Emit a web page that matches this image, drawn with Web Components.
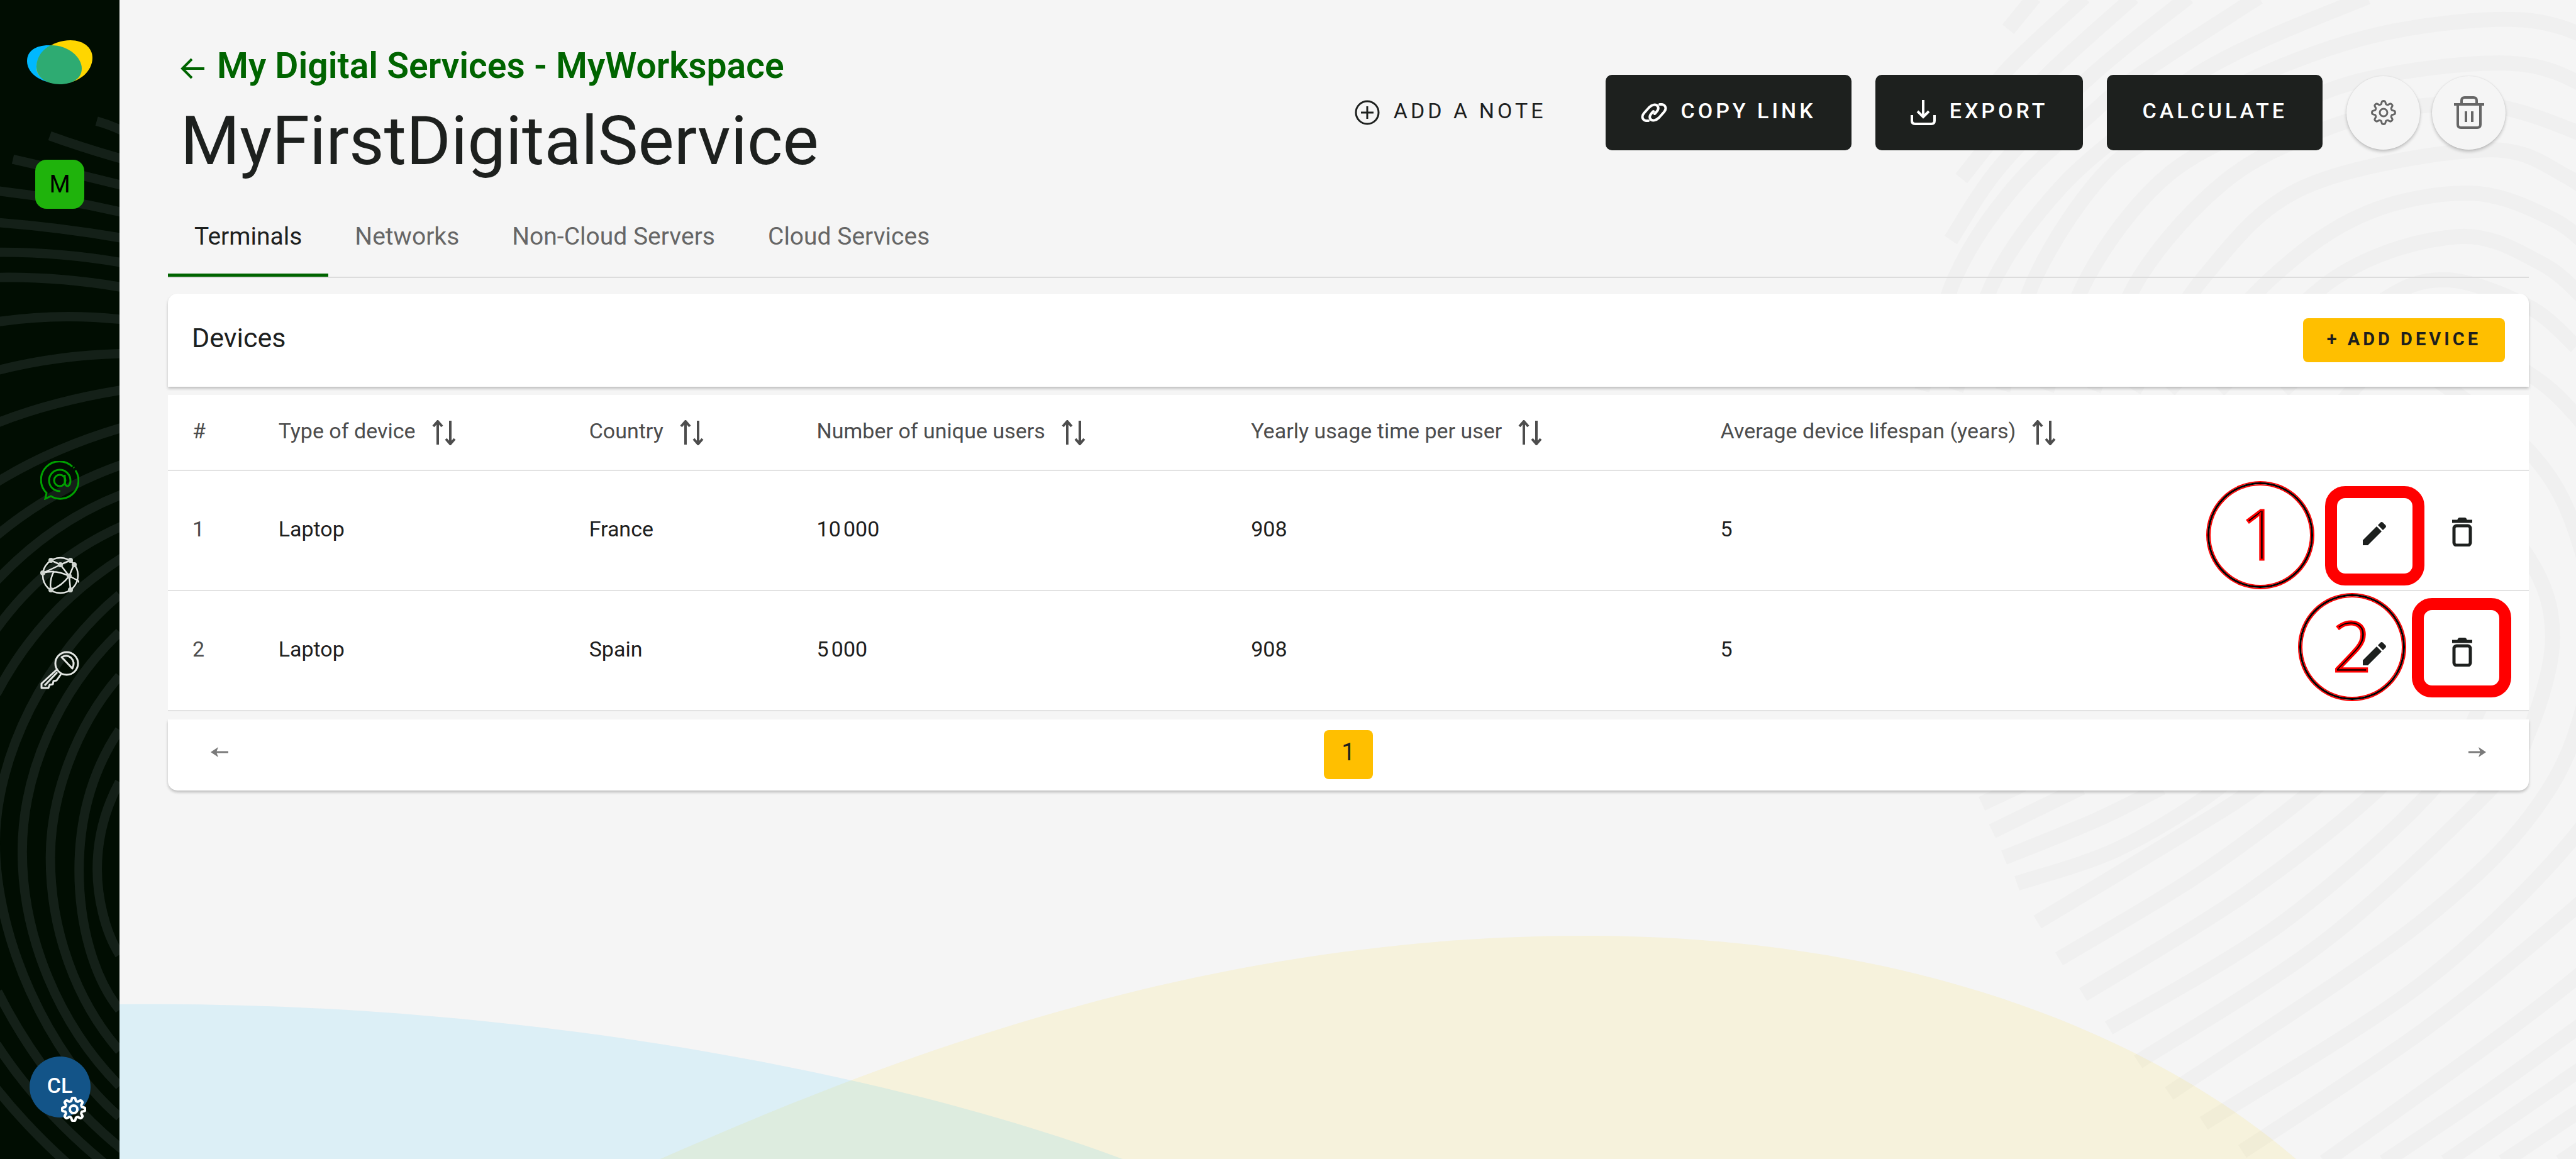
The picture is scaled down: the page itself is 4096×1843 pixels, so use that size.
<!DOCTYPE html>
<html lang="en">
<head>
<meta charset="utf-8">
<title>MyFirstDigitalService</title>
<style>
  html, body { margin: 0; height: 100%; }
  body { font-family: Roboto, "Liberation Sans", sans-serif; color: #1d201e; background: #f5f5f5; overflow: hidden; }
</style>
</head>
<body>
<app-shell>
  <side-nav slot="nav"></side-nav>
  <page-header>
    <a slot="back" href="#services">My Digital Services - MyWorkspace</a>
    <span slot="title">MyFirstDigitalService</span>
    <action-button slot="actions" variant="text" icon="plus">ADD A NOTE</action-button>
    <action-button slot="actions" icon="link">COPY LINK</action-button>
    <action-button slot="actions" icon="export">EXPORT</action-button>
    <action-button slot="actions">CALCULATE</action-button>
    <round-button slot="actions" icon="gear" label="Settings"></round-button>
    <round-button slot="actions" icon="bin" label="Delete service"></round-button>
  </page-header>
  <tab-bar items="Terminals,Networks,Non-Cloud Servers,Cloud Services"></tab-bar>
  <device-panel></device-panel>
  <note-frame slot="notes" style="top:773px;right:241px"></note-frame>
  <note-frame slot="notes" style="top:951px;right:103px"></note-frame>
  <note-ring slot="notes" style="top:765px;right:416px">1</note-ring>
  <note-ring slot="notes" style="top:943px;right:270px">2</note-ring>
</app-shell>

<script>
const define = (name, html, setup) => {
  const tpl = document.createElement('template');
  customElements.define(name, class extends HTMLElement {
    constructor() {
      super();
      tpl.innerHTML = html;
      this.attachShadow({ mode: 'open' }).append(tpl.content.cloneNode(true));
    }
    connectedCallback() { if (setup) setup(this, this.shadowRoot); }
  });
};

/* Outline of a cog with eight soft teeth. */
const cog = (c, r, a) => {
  let d = '';
  for (let i = 0; i < 96; i++) {
    const t = i / 96 * Math.PI * 2;
    const w = Math.tanh(2 * Math.cos(8 * t)) * a;
    d += (i ? 'L' : 'M') + (c + (r + w) * Math.cos(t)).toFixed(2) + ' ' + (c + (r + w) * Math.sin(t)).toFixed(2);
  }
  return d + 'Z';
};

const ICONS = {
  back: [38, 34, '<path d="M18 2 3 17l15 15M3 17h35" stroke-width="4"/>'],
  plus: [40, 40, '<circle cx="20" cy="20" r="18" stroke-width="3"/><path d="M20 10v20M10 20h20" stroke-width="3"/>'],
  link: [42, 30, '<g stroke-width="4" stroke-linecap="round"><path id="l" d="M12 28C3 29 0 22 5 16L13 7C18 2 24 1 27 5C29 9 27 12 22 17"/><path transform="rotate(180 21 15)" d="M12 28C3 29 0 22 5 16L13 7C18 2 24 1 27 5C29 9 27 12 22 17"/></g>'],
  export: [40, 40, '<path d="M20 0v26M11 18l9 9 9-9M2 24v9q0 5 5 5h26q5 0 5-5v-9" stroke-width="4"/>'],
  gear: [40, 40, `<path d="${cog(20, 16, 2.5)}" stroke-width="3"/><circle cx="20" cy="20" r="6" stroke-width="3"/>`],
  bin: [48, 52, '<path d="M0 13h48M12 12V7q0-5 5-5h14q5 0 5 5v5M6 14v31q0 5 5 5h26q5 0 5-5V14M19 24v17M29 24v17" stroke-width="4"/>'],
  sort: [38, 40, '<path d="M9 39V3M2 10l7-8 7 8M29 1v36M22 30l7 8 7-8" stroke-width="4"/>'],
  pencil: [38, 42, '<path d="M0 34v8h8L30 20l-8-8zM36 14q2-2 0-4l-4-4q-2-2-4 0l-4 4 8 8z" fill="currentColor" stroke="none"/>'],
  trash: [34, 46, '<path d="M1 6h32" stroke-width="5"/><path d="M9 5q1-5 4-5h8q3 0 4 5z" fill="currentColor" stroke="none"/><rect x="4" y="13" width="26" height="31" rx="4" stroke-width="5"/>'],
  prev: [28, 18, '<path d="M6 9h22" stroke-width="3"/><path d="M0 9 12 1 9 9l3 8z" fill="currentColor" stroke="none"/>'],
  next: [28, 18, '<path d="M0 9h22" stroke-width="3"/><path d="M28 9 16 1l3 8-3 8z" fill="currentColor" stroke="none"/>'],
  at: [62, 62, '<g stroke-width="3"><path d="M51 9A29 29 0 0 0 10 51L8 60l9-4A29 29 0 0 0 56 15M53 10l1 1"/><circle cx="31" cy="31" r="9"/><path d="M39 22v13q1 5 5 5 4-2 4-9a17 17 0 1 0-16 17"/></g>'],
  globe: [62, 60, '<g stroke-width="2.500"><circle cx="32" cy="30" r="28"/><path d="M4 26Q24 20 46 31T60 40M17 6 32 13 48 6M32 13Q14 22 4 26M32 13 46 31 54 12M46 31 48 52M46 31Q34 47 17 53Q14 38 22 23"/></g><g fill="#cfd4cf" stroke="none"><circle cx="17" cy="6" r="4"/><circle cx="48" cy="6" r="4"/><circle cx="32" cy="13" r="4"/><circle cx="54" cy="13" r="4"/><circle cx="4" cy="26" r="4"/><circle cx="46" cy="31" r="4"/><circle cx="17" cy="53" r="4"/><circle cx="48" cy="53" r="4"/></g>'],
  key: [62, 62, '<g stroke-width="3" stroke-linejoin="round"><circle cx="42" cy="20" r="18"/><path d="M34 10q8-5 15 1 7 7 2 17zM26 30 2 52v7h11l2-5 5-1 1-5 5-1 7-10M7 55 27 34"/></g>'],
  cogbold: [40, 40, `<path d="${cog(20, 16, 2.5)}" stroke-width="4"/><circle cx="20" cy="20" r="6" stroke-width="4"/>`],
  logo: [104, 70, '<g stroke="none"><path d="M0 33C0 17 14 8 34 8c24 0 46 18 46 37 0 14-12 24-28 24C28 69 0 56 0 33z" fill="#00b8ff"/><path d="M104 28C104 12 90 0 69 0 40 0 15 20 15 43c0 16 16 26 38 26 30 0 51-20 51-41z" fill="#ffd600"/><path d="M38 8C24 14 15 28 15 42c0 17 16 28 37 28 20 0 35-9 35-25C87 27 66 8 38 8z" fill="#2eab72"/></g>']
};
define('app-icon', `<style>:host{display:block;flex:none}svg{display:block;fill:none;stroke:currentColor}</style>`, (el, root) => {
  const [w, h, body] = ICONS[el.getAttribute('name')];
  root.querySelector('svg')?.remove();
  root.innerHTML += `<svg width="${w}" height="${h}" viewBox="0 0 ${w} ${h}" aria-hidden="true">${body}</svg>`;
});

/* Page backdrop: two soft hills and a contour pattern on the right. */
const smooth = pts => {
  let d = `M${pts[0]}`;
  for (let i = 0; i < pts.length - 1; i++) {
    const a = pts[i - 1] || pts[i], b = pts[i], c = pts[i + 1], e = pts[i + 2] || c;
    d += `C${b[0] + (c[0] - a[0]) / 6} ${b[1] + (c[1] - a[1]) / 6} ${c[0] - (e[0] - b[0]) / 6} ${c[1] - (e[1] - b[1]) / 6} ${c}`;
  }
  return d;
};
const arch = (k, ...left) => {
  const x = 4177 + 22 * k, y = 478 - 74 * k;
  return [...left, [x, y], [x + 142, y + 46], [x + 223, y + 114]];
};
const CONTOURS = [
  arch(0, [3900, 667], [4060, 520]),
  arch(1, [3790, 667], [3991, 473]),
  arch(2, [3705, 667], [3882, 473], [4040, 365]),
  arch(3, [3645, 667], [3765, 473], [3935, 320]),
  arch(4, [3576, 667], [3655, 473], [3800, 310], [3959, 260 - 35], [4110, 184]).slice(0, 5).concat([[4265, 182], [4407, 228], [4440, 250]]),
  arch(5, [3496, 667], [3566, 473], [3690, 310], [3840, 220], [4030, 138]),
  arch(6, [3421, 667], [3477, 473], [3600, 290], [3742, 200], [3868, 125], [4080, 55]),
  [[3341, 667], [3409, 473], [3520, 320], [3658, 200], [3756, 125], [3880, 62], [4044, -5]],
  [[3283, 667], [3340, 473], [3440, 320], [3577, 190], [3658, 125], [3858, -5]],
  [[3332, 410], [3420, 280], [3577, 125], [3738, -5]],
  [[3350, 305], [3426, 210], [3500, 125], [3644, -5]],
  [[3368, 215], [3423, 125], [3560, -5]],
  [[3430, 50], [3475, -5]],
  [[3900, 800], [4150, 552], [4319, 638], [4400, 710], [4440, 770]],
  [[3385, 1373], [3455, 1340]],
  [[3403, 1420], [3556, 1345]],
  [[3423, 1465], [3580, 1401], [3693, 1345]],
  [[3445, 1509], [3616, 1451], [3784, 1350], [3900, 1240]],
  [[3480, 1575], [3721, 1430], [3854, 1345], [3980, 1240]],
  [[3517, 1638], [3756, 1494], [3956, 1345], [4060, 1240]],
  [[3558, 1699], [3833, 1529], [4058, 1352], [4140, 1240]],
  [[3602, 1756], [3896, 1578], [4152, 1352], [4240, 1200]],
  [[3652, 1814], [3973, 1606], [4250, 1352], [4320, 1249], [4360, 1088], [4319, 953], [4180, 800]],
  [[3705, 1868], [4142, 1570], [4359, 1340], [4430, 1100], [4400, 910], [4319, 770], [4150, 640]],
  [[3764, 1919], [4142, 1676], [4400, 1426], [4450, 1300]],
  [[3830, 1967], [4142, 1758], [4400, 1549], [4450, 1490]],
  [[3970, 1985], [4247, 1787], [4400, 1670], [4450, 1620]],
  [[4072, 1985], [4250, 1865], [4410, 1750]],
  [[4177, 1985], [4410, 1825]],
  [[4275, 1985], [4410, 1895]],
  [[4373, 1985], [4410, 1960]]
].map(smooth).join('');
define('app-shell', `
<style>
  :host { display: flex; min-height: 100vh; position: relative; background: #f5f5f5; }
  .sky { position: absolute; inset: 0; width: 100%; height: 100%; }
  main { flex: 1; min-width: 0; padding: 70px 75px 0 77px; position: relative; }
  ::slotted([slot=nav]) { position: relative; }
</style>
<svg class="sky" viewBox="0 0 4096 1843" preserveAspectRatio="none" aria-hidden="true">
  <path d="M1050 1843C1400 1690 1900 1488 2520 1488C3040 1488 3420 1645 3651 1843z" fill="#ffd600" fill-opacity=".1"/>
  <path d="M190 1597C800 1590 1400 1700 1785 1843H190z" fill="#00b8ff" fill-opacity=".1"/>
  <path d="${CONTOURS}" transform="scale(.9309)" fill="none" stroke="#000" stroke-opacity=".02" stroke-width="26"/>
</svg>
<slot name="nav"></slot>
<main><slot></slot></main>
<slot name="notes"></slot>`);

define('side-nav', `
<style>
  :host { display: flex; flex: none; width: 190px; background: #010d02; color: #e4e7e4; overflow: hidden; }
  .rings { position: absolute; inset: 0; width: 100%; height: 100%; }
  nav { position: relative; flex: 1; display: flex; flex-direction: column; align-items: center; padding: 64px 0 66px; box-sizing: border-box; }
  a { display: block; color: inherit; text-decoration: none; }
  .space { display: flex; align-items: center; justify-content: center; width: 78px; height: 78px; margin-top: 120px; border-radius: 18px; background: #1fb30c; color: #000; font-size: 38px; }
  .links { display: flex; flex-direction: column; gap: 90px; margin-top: 401px; }
  .links .on { color: #00a000; }
  .user { position: relative; display: flex; align-items: center; justify-content: center; width: 97px; height: 97px; margin-top: auto; border-radius: 50%; background: #135488; color: #fff; font: 500 34px Roboto, sans-serif; border: 0; padding: 0 0 6px; box-sizing: border-box; }
  .user app-icon { position: absolute; right: 7px; bottom: -7px; }
</style>
<svg class="rings" viewBox="0 0 204 1980" preserveAspectRatio="none" aria-hidden="true">
  <path fill="none" stroke="#142018" stroke-width="16" d="
  M204 1336C175 1390 166 1440 166 1485C166 1530 178 1590 204 1631
  M204 1247C155 1320 135 1400 135 1487C135 1580 160 1670 204 1725
  M204 1155C130 1240 86 1360 86 1465C86 1590 130 1710 204 1795
  M204 1080C100 1180 38 1320 38 1455C38 1600 100 1750 204 1855
  M204 1016C80 1120-8 1290-8 1440C-8 1600 80 1800 204 1908
  M210 952Q70 1040-6 1185M-4 1694Q80 1860 208 1963
  M210 898Q80 955-6 1074M-6 1784Q70 1900 184 1992
  M210 844Q90 890-6 992M-6 1860Q50 1930 120 1992
  M210 793Q90 835-6 915M210 730Q90 765-6 824M210 666Q90 685-6 723M210 604Q100 606-6 633M210 546Q100 534-6 550
  M210 491Q100 472-6 474M210 449Q100 430-6 431M210 407Q100 388-6 380M210 363Q100 338-6 326
  M210 317Q110 292 22 272M210 272Q140 252 85 232M210 224Q190 214 165 207"/>
</svg>
<nav>
  <a href="#home" aria-label="Home"><app-icon name="logo"></app-icon></a>
  <a class="space" href="#workspace">M</a>
  <div class="links">
    <a class="on" href="#digital" aria-label="Digital services"><app-icon name="at"></app-icon></a>
    <a href="#systems" aria-label="Information systems"><app-icon name="globe"></app-icon></a>
    <a href="#admin" aria-label="Administration"><app-icon name="key"></app-icon></a>
  </div>
  <button class="user">CL<app-icon name="cogbold"></app-icon></button>
</nav>`);

define('page-header', `
<style>
  :host { display: flex; justify-content: space-between; align-items: center; }
  .titles { display: flex; flex-direction: column; gap: 20px; padding-left: 20px; }
  .back { display: flex; align-items: center; gap: 20px; color: #006400; }
  ::slotted(a) { color: inherit; text-decoration: none; font-size: 57px; line-height: 70px; font-weight: 600; }
  .back app-icon { padding-top: 8px; }
  h1 { margin: 0; font-size: 108px; line-height: 128px; font-weight: 400; }
  .actions { display: flex; align-items: center; padding-right: 37px; }
  ::slotted(action-button) { margin-right: 38px; }
  ::slotted(round-button:not(:last-child)) { margin-right: 19px; }
</style>
<div class="titles">
  <div class="back"><app-icon name="back"></app-icon><slot name="back"></slot></div>
  <h1><slot name="title"></slot></h1>
</div>
<div class="actions"><slot name="actions"></slot></div>`);

define('action-button', `
<style>
  :host { display: block; }
  button { display: flex; align-items: center; gap: 22px; height: 120px; padding: 0 56px; border: 0; border-radius: 10px; background: #1d201e; color: #fff; font: 500 34px Roboto, sans-serif; letter-spacing: 5px; white-space: nowrap; }
  span { padding-bottom: 6px; }
  :host([variant=text]) button { background: none; color: #1d201e; font-weight: 400; }
</style>
<button><span><slot></slot></span></button>`, (el, root) => {
  const name = el.getAttribute('icon');
  if (name && !root.querySelector('app-icon')) {
    const i = document.createElement('app-icon');
    i.setAttribute('name', name);
    root.querySelector('button').prepend(i);
  }
});

define('round-button', `
<style>
  :host { display: block; }
  button { display: flex; align-items: center; justify-content: center; width: 117px; height: 117px; padding: 0; border: 0; border-radius: 50%; background: #f5f5f5; color: #666; box-shadow: 0 3px 5px rgba(0,0,0,.22), 0 0 2px rgba(0,0,0,.1); }
</style>
<button></button>`, (el, root) => {
  const b = root.querySelector('button');
  b.setAttribute('aria-label', el.getAttribute('label'));
  b.innerHTML = `<app-icon name="${el.getAttribute('icon')}"></app-icon>`;
});

define('tab-bar', `
<style>
  :host { display: block; margin-top: 26px; border-bottom: 2px solid #dcdcdc; }
  div { display: flex; }
  button { padding: 40px 42px 37px; border: 0; border-bottom: 5px solid transparent; background: none; color: #666; font: 400 39px/44px Roboto, sans-serif; letter-spacing: 0; }
  button[aria-selected=true] { color: #1d201e; border-color: #006400; }
</style>
<div role="tablist"></div>`, (el, root) => {
  root.querySelector('div').innerHTML = el.getAttribute('items').split(',')
    .map((t, i) => `<button role="tab" aria-selected="${i === 0}">${t}</button>`).join('');
});

const COLUMNS = ['Type of device', 'Country', 'Number of unique users', 'Yearly usage time per user', 'Average device lifespan (years)'];
const ROWS = [['1', 'Laptop', 'France', '10\u202f000', '908', '5'], ['2', 'Laptop', 'Spain', '5\u202f000', '908', '5']];
define('device-panel', `
<style>
  :host { display: flex; flex-direction: column; gap: 13px; margin-top: 25px; }
  .card { background: #fff; box-shadow: 0 3px 4px rgba(0,0,0,.22); }
  header { display: flex; justify-content: space-between; align-items: center; padding: 39px 38px; border-radius: 15px 15px 0 0; }
  h2 { margin: 0; padding-bottom: 8px; font-size: 43px; font-weight: 400; }
  button { border: 0; font-family: inherit; color: inherit; background: none; }
  .add { height: 70px; padding: 0 38px 4px; border-radius: 8px; background: #ffbf00; font-size: 29px; font-weight: 700; letter-spacing: 5px; }
  table { width: 100%; table-layout: fixed; border-collapse: separate; border-spacing: 0; background: #fff; font-size: 34px; }
  th, td { box-sizing: border-box; padding: 0 0 6px 39px; border-bottom: 2px solid #e2e2e2; text-align: left; font-weight: 400; white-space: nowrap; }
  thead th { height: 121px; color: #4d4d4d; }
  tbody th, tbody td { height: 191px; }
  tbody th { color: #4d4d4d; }
  .head { display: flex; align-items: center; gap: 26px; }
  .head button { padding: 6px 0 0; }
  td.acts { padding: 4px 56px 0 0; }
  .acts div { display: flex; justify-content: flex-end; gap: 39px; }
  .acts button { display: flex; align-items: center; justify-content: center; width: 100px; height: 100px; padding: 0; }
  footer { display: flex; justify-content: space-between; align-items: center; padding: 17px 50px 18px; border-radius: 0 0 15px 15px; }
  footer button { display: flex; align-items: center; justify-content: center; width: 64px; height: 78px; padding: 0 0 8px; color: #7a7a7a; }
  footer .page { width: 78px; border-radius: 8px; background: #ffbf00; color: #1d201e; font-size: 38px; }
</style>
<header class="card"><h2>Devices</h2><button class="add">+ ADD DEVICE</button></header>
<table>
  <colgroup><col style="width:3.64%"><col style="width:13.16%"><col style="width:9.64%"><col style="width:18.4%"><col style="width:19.88%"><col style="width:20%"><col></colgroup>
  <thead><tr><th scope="col">#</th>${COLUMNS.map(c => `<th scope="col"><div class="head"><span>${c}</span><button aria-label="Sort by ${c}"><app-icon name="sort"></app-icon></button></div></th>`).join('')}<td></td></tr></thead>
  <tbody>${ROWS.map(r => `<tr><th scope="row">${r[0]}</th>${r.slice(1).map(v => `<td>${v}</td>`).join('')}<td class="acts"><div><button aria-label="Edit"><app-icon name="pencil"></app-icon></button><button aria-label="Delete"><app-icon name="trash"></app-icon></button></div></td></tr>`).join('')}</tbody>
</table>
<footer class="card"><button aria-label="Previous page"><app-icon name="prev"></app-icon></button><button class="page">1</button><button aria-label="Next page"><app-icon name="next"></app-icon></button></footer>`);

define('note-frame', `<style>:host{display:block;position:absolute;box-sizing:border-box;width:158px;height:158px;border:19px solid #f00;border-radius:32px}</style>`);
define('note-ring', `
<style>
  :host { display: flex; align-items: center; justify-content: center; position: absolute; box-sizing: border-box; width: 168px; height: 168px; margin: 2px; border: 3px solid #000; border-radius: 50%; box-shadow: 0 0 0 2px #f00, inset 0 0 0 2px #f00; color: #000; font: 300 110px/150px "Open Sans", sans-serif; -webkit-text-stroke: 3px #f00; }
  span { padding-bottom: 8px; }
</style>
<span><slot></slot></span>`);
</script>
</body>
</html>
